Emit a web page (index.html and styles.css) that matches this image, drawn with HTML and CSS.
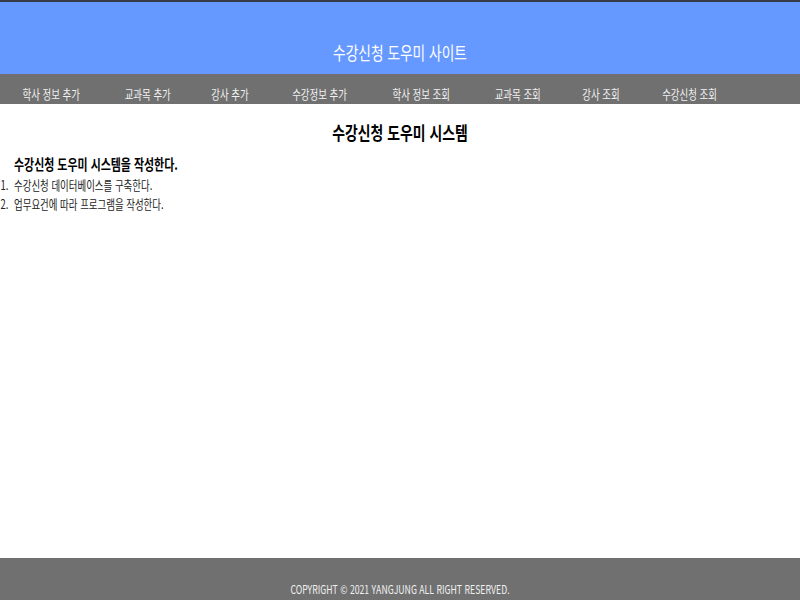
FILE: index.html
```html
<!DOCTYPE html>
<html lang="ko">
<head>
<meta charset="utf-8">
<title>수강신청 도우미 사이트</title>
<link rel="stylesheet" href="styles.css">
</head>
<body>
<div class="page">
  <header class="site-header">
    <h1 class="site-title">수강신청 도우미 사이트</h1>
  </header>
  <nav class="site-nav">
    <ul class="nav-list">
      <li class="nav-item"><a class="nav-link" href="#">학사 정보 추가</a></li>
      <li class="nav-item"><a class="nav-link" href="#">교과목 추가</a></li>
      <li class="nav-item"><a class="nav-link" href="#">강사 추가</a></li>
      <li class="nav-item"><a class="nav-link" href="#">수강정보 추가</a></li>
      <li class="nav-item"><a class="nav-link" href="#">학사 정보 조회</a></li>
      <li class="nav-item"><a class="nav-link" href="#">교과목 조회</a></li>
      <li class="nav-item"><a class="nav-link" href="#">강사 조회</a></li>
      <li class="nav-item"><a class="nav-link" href="#">수강신청 조회</a></li>
    </ul>
  </nav>
  <main class="content">
    <h2 class="content-title">수강신청 도우미 시스템</h2>
    <p class="content-lead">수강신청 도우미 시스템을 작성한다.</p>
    <ol class="content-list">
      <li class="content-item">수강신청 데이터베이스를 구축한다.</li>
      <li class="content-item">업무요건에 따라 프로그램을 작성한다.</li>
    </ol>
  </main>
  <footer class="site-footer">
    <p class="footer-text">COPYRIGHT © 2021 YANGJUNG ALL RIGHT RESERVED.</p>
  </footer>
</div>
</body>
</html>
```
FILE: styles.css
```css
html,
body {
  margin: 0;
  padding: 0;
  height: 100%;
  overflow: hidden;
  background: #ffffff;
}

body {
  font-family: "Noto Sans CJK KR", "Noto Sans", sans-serif;
  color: #111111;
}

.page {
  width: 800px;
  height: 600px;
  display: flex;
  flex-direction: column;
}

/* the site's type is horizontally condensed */
.site-title,
.nav-link,
.content-title,
.content-lead,
.content-list,
.footer-text {
  transform: scaleX(0.75);
}

.content-lead,
.content-list {
  transform-origin: 0 0;
}

.site-header {
  box-sizing: border-box;
  height: 74px;
  border-top: 2px solid #353b47;
  background: #6699ff;
  padding-top: 35px;
}

.site-title {
  margin: 0;
  font-size: 18.3px;
  line-height: 30px;
  font-weight: normal;
  color: #ffffff;
  text-align: center;
}

.site-nav {
  height: 30px;
  background: #707070;
  overflow: hidden;
}

.nav-list {
  display: flex;
  margin: 0 0 0 -1px;
  padding: 0;
  list-style: none;
}

.nav-item {
  padding: 10px 13.7px 0;
}

.nav-link {
  display: block;
  font-size: 12.6px;
  line-height: 20px;
  color: #f2f2f2;
  text-decoration: none;
  white-space: nowrap;
}

.content {
  flex: 1;
}

.content-title {
  margin: 13.5px 0 0;
  font-size: 18.5px;
  line-height: 28px;
  font-weight: bold;
  text-align: center;
  color: #000000;
}

.content-lead {
  margin: 8px 0 0;
  padding-left: 18.7px;
  font-size: 14.6px;
  line-height: 20px;
  font-weight: bold;
  color: #000000;
}

.content-list {
  margin: 1px 0 0;
  padding-left: 14.7px;
  font-size: 12.6px;
  line-height: 19px;
  color: #222222;
}

.content-item {
  padding-left: 4px;
}

.site-footer {
  box-sizing: border-box;
  height: 42px;
  padding-top: 20.5px;
  background: #707070;
}

.footer-text {
  margin: 0;
  color: #f0f0f0;
  font-size: 11.6px;
  line-height: 20px;
  text-align: center;
}
```
